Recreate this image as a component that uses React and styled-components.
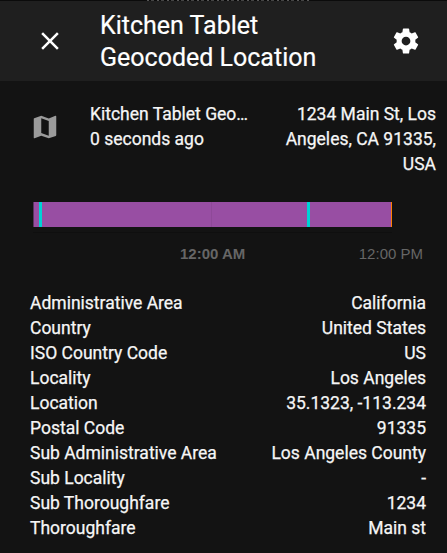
import React from "react";
import styled, { createGlobalStyle } from "styled-components";

const GlobalStyle = createGlobalStyle`
  * { box-sizing: border-box; }
  body {
    margin: 0;
    background: #131313;
    color: #f6f6f6;
    font-family: Roboto, "Liberation Sans", sans-serif;
  }
`;

const Page = styled.div`
  width: 447px;
  height: 553px;
  overflow: hidden;
  background: #131313;
`;

const Backdrop = styled.div`
  height: 1px;
  padding-left: 147px;
  background: #0b0b0b;
`;

const BackdropEdge = styled.div`
  width: 164px;
  height: 1px;
  background: repeating-linear-gradient(90deg, #555 0 2px, #0b0b0b 2px 4px, #444 4px 7px, #0b0b0b 7px 10px);
`;

const Header = styled.header`
  height: 80px;
  background: #1f1f1f;
  display: flex;
  align-items: center;
  padding: 0 26px 0 35px;
`;

const Icon = styled.svg`
  display: block;
  flex: none;
  width: 30px;
  height: 30px;
  fill: ${(p) => p.$color || "#fff"};
`;

const Title = styled.h1`
  flex: 1;
  margin: 0 0 0 35px;
  padding: 2px 50px 0 0;
  color: #fff;
  font-size: 25px;
  font-weight: 400;
  line-height: 32px;
  -webkit-text-stroke: 0.2px currentColor;
`;

const StateRow = styled.section`
  display: flex;
  align-items: flex-start;
  padding: 21px 11px 0 30px;
  font-size: 17.5px;
  line-height: 25px;
  -webkit-text-stroke: 0.25px currentColor;
`;

const StateIcon = styled.div`
  width: 60px;
  padding-top: 10px;
`;

const Info = styled.div`
  width: 160px;
`;

const Name = styled.div`
  overflow: hidden;
  text-overflow: ellipsis;
  white-space: nowrap;
`;

const State = styled.div`
  flex: 1;
  padding-left: 20px;
  text-align: right;
`;

const Timeline = styled.section`
  margin: 25px 0 0 33px;
`;

const Bar = styled.div`
  display: flex;
  width: 359px;
  height: 25px;
`;

const Segment = styled.span`
  width: ${(p) => p.$w}px;
  background: ${(p) => p.$color};
`;

const AxisLine = styled.div`
  width: 359px;
  height: 6px;
  border-bottom: 1px solid #0f0f0f;
`;

const Axis = styled.div`
  display: flex;
  justify-content: space-between;
  margin: 12px 24px 0 147px;
  color: #666;
  font-family: "Liberation Sans", Arial, sans-serif;
  font-size: 15px;
  line-height: 18px;
`;

const Major = styled.span`
  font-weight: 700;
`;

const Attributes = styled.dl`
  margin: 28px 21px 0 30px;
  font-size: 17.5px;
  line-height: 25px;
  -webkit-text-stroke: 0.25px currentColor;
`;

const Attribute = styled.div`
  display: flex;
  justify-content: space-between;

  dd { margin: 0; }
`;

const segments = [
  [1, "#5a335f"], [5, "#984ea3"], [3, "#00d2d5"], [169, "#984ea3"], [1, "#8e4998"],
  [95, "#984ea3"], [3, "#00d2d5"], [81, "#984ea3"], [1, "#ff7f00"],
];

const attributes = [
  ["Administrative Area", "California"],
  ["Country", "United States"],
  ["ISO Country Code", "US"],
  ["Locality", "Los Angeles"],
  ["Location", "35.1323, -113.234"],
  ["Postal Code", "91335"],
  ["Sub Administrative Area", "Los Angeles County"],
  ["Sub Locality", "-"],
  ["Sub Thoroughfare", "1234"],
  ["Thoroughfare", "Main st"],
];

export default function App() {
  return (
    <Page>
      <GlobalStyle />
      <Backdrop><BackdropEdge /></Backdrop>
      <Header>
        <Icon viewBox="0 0 24 24">
          <path d="M19,6.41L17.59,5L12,10.59L6.41,5L5,6.41L10.59,12L5,17.59L6.41,19L12,13.41L17.59,19L19,17.59L13.41,12L19,6.41Z" />
        </Icon>
        <Title>Kitchen Tablet Geocoded Location</Title>
        <Icon viewBox="0 0 24 24">
          <path d="M12,15.5A3.5,3.5 0 0,1 8.5,12A3.5,3.5 0 0,1 12,8.5A3.5,3.5 0 0,1 15.5,12A3.5,3.5 0 0,1 12,15.5M19.43,12.97C19.47,12.65 19.5,12.33 19.5,12C19.5,11.67 19.47,11.34 19.43,11L21.54,9.37C21.73,9.22 21.78,8.95 21.66,8.73L19.66,5.27C19.54,5.05 19.27,4.96 19.05,5.05L16.56,6.05C16.04,5.66 15.5,5.32 14.87,5.07L14.5,2.42C14.46,2.18 14.25,2 14,2H10C9.75,2 9.54,2.18 9.5,2.42L9.13,5.07C8.5,5.32 7.96,5.66 7.44,6.05L4.95,5.05C4.73,4.96 4.46,5.05 4.34,5.27L2.34,8.73C2.21,8.95 2.27,9.22 2.46,9.37L4.57,11C4.53,11.34 4.5,11.67 4.5,12C4.5,12.33 4.53,12.65 4.57,12.97L2.46,14.63C2.27,14.78 2.21,15.05 2.34,15.27L4.34,18.73C4.46,18.95 4.73,19.03 4.95,18.95L7.44,17.94C7.96,18.34 8.5,18.68 9.13,18.93L9.5,21.58C9.54,21.82 9.75,22 10,22H14C14.25,22 14.46,21.82 14.5,21.58L14.87,18.93C15.5,18.67 16.04,18.34 16.56,17.94L19.05,18.95C19.27,19.03 19.54,18.95 19.66,18.73L21.66,15.27C21.78,15.05 21.73,14.78 21.54,14.63L19.43,12.97Z" />
        </Icon>
      </Header>
      <StateRow>
        <StateIcon>
          <Icon $color="#9b9b9b" viewBox="0 0 24 24">
            <path d="M15,19L9,16.89V5L15,7.11M20.5,3C20.44,3 20.39,3 20.34,3L15,5.1L9,3L3.36,4.9C3.15,4.97 3,5.15 3,5.38V20.5A0.5,0.5 0 0,0 3.5,21C3.55,21 3.61,21 3.66,20.97L9,18.9L15,21L20.64,19.1C20.85,19 21,18.85 21,18.62V3.5A0.5,0.5 0 0,0 20.5,3Z" />
          </Icon>
        </StateIcon>
        <Info>
          <Name>Kitchen Tablet Geocoded Location</Name>
          <div>0 seconds ago</div>
        </Info>
        <State>1234 Main St, Los Angeles, CA 91335, USA</State>
      </StateRow>
      <Timeline>
        <Bar>
          {segments.map(([w, color], i) => <Segment key={i} $w={w} $color={color} />)}
        </Bar>
        <AxisLine />
        <Axis>
          <Major>12:00 AM</Major>
          <span>12:00 PM</span>
        </Axis>
      </Timeline>
      <Attributes>
        {attributes.map(([label, value]) => (
          <Attribute key={label}><dt>{label}</dt><dd>{value}</dd></Attribute>
        ))}
      </Attributes>
    </Page>
  );
}
